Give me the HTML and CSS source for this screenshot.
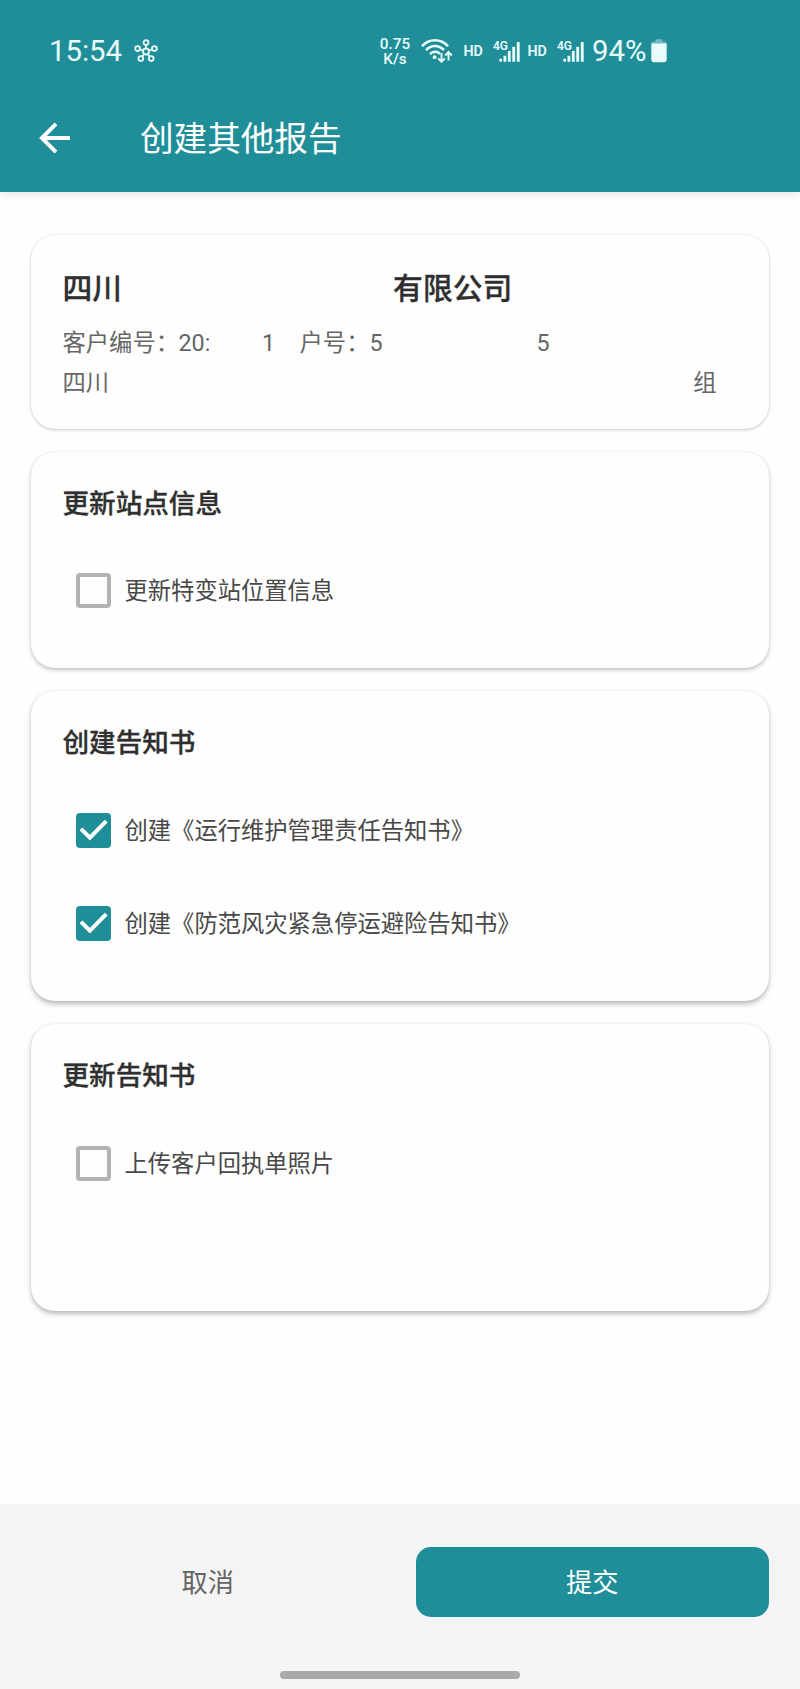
FILE: index.html
```html
<!DOCTYPE html>
<html lang="zh-CN">
<head>
<meta charset="utf-8">
<title>创建其他报告</title>
<link rel="stylesheet" href="styles.css">
</head>
<body>
<div class="screen">
  <header class="header">
    <div class="status">
      <span class="time">15:54</span>
      <svg class="hub" width="24" height="24" viewBox="0 0 24 24" fill="none" stroke="currentColor" stroke-width="1.8">
        <circle cx="12" cy="12.5" r="3"/>
        <circle cx="12" cy="3.6" r="2.4"/><circle cx="20.4" cy="9.6" r="2.4"/><circle cx="17.2" cy="19.6" r="2.4"/><circle cx="6.8" cy="19.6" r="2.4"/><circle cx="3.6" cy="9.6" r="2.4"/>
        <path d="M12 6v3.5M18 10.4l-3.2 1.2M15.8 17.7l-2-2.8M8.2 17.7l2-2.8M6 10.4l3.2 1.2"/>
      </svg>
      <span class="speed"><span>0.75</span><span>K/s</span></span>
      <svg class="wifi" width="32" height="26" viewBox="0 0 32 26" fill="none" stroke="currentColor" stroke-width="2.5">
        <path d="M1 8.2C8 .2 20 .2 27 8.2"/>
        <path d="M5 12.2c5-5.600 13-5.600 18 0"/>
        <path d="M9 16.200c3-3.300 7-3.300 10-.4"/>
        <circle cx="13.600" cy="19.200" r="1.900" fill="currentColor" stroke="none"/>
        <path stroke-width="1.900" d="M20.500 15v8.500M17.200 20.300l3.300 3.500 3.300-3.500M27.500 22.500v-8M24.200 17.500l3.300-3.500 3.300 3.500"/>
      </svg>
      <span class="hd">HD</span>
      <span class="signal">
        <span class="net">4G</span>
        <svg width="21" height="20" viewBox="6 2.500 21 20" fill="currentColor">
          <rect x="6.300" y="19.300" width="2.800" height="3" rx="1"/><rect x="10.500" y="16.300" width="2.800" height="6" rx=".6"/><rect x="14.900" y="11.300" width="2.800" height="11" rx=".6"/><rect x="19.300" y="7.300" width="2.800" height="15" rx=".6"/><rect x="23.800" y="2.500" width="2.900" height="19.800" rx=".6"/>
        </svg>
      </span>
      <span class="hd hd-second">HD</span>
      <span class="signal">
        <span class="net">4G</span>
        <svg width="21" height="20" viewBox="6 2.500 21 20" fill="currentColor">
          <rect x="6.300" y="19.300" width="2.800" height="3" rx="1"/><rect x="10.500" y="16.300" width="2.800" height="6" rx=".6"/><rect x="14.900" y="11.300" width="2.800" height="11" rx=".6"/><rect x="19.300" y="7.300" width="2.800" height="15" rx=".6"/><rect x="23.800" y="2.500" width="2.900" height="19.800" rx=".6"/>
        </svg>
      </span>
      <span class="percent">94%</span>
      <svg class="battery" width="16" height="24" viewBox="0 0 16 24" fill="currentColor">
        <path opacity=".4" d="M4.500 1.200q0-1 1-1h5q1 0 1 1v1.300h2q2 0 2 2v.5H.5v-.5q0-2 2-2h2z"/>
        <path d="M.3 4.600h15.400v16.200q0 2.400-2.400 2.400H2.700q-2.400 0-2.400-2.400z"/>
      </svg>
    </div>
    <div class="appbar">
      <svg class="back" width="32" height="32" viewBox="0 0 32 32" fill="none" stroke="currentColor" stroke-width="3.900"><path d="M31 16H3.500M17 1.900L2.900 16 17 30.100"/></svg>
      <h1 class="page-title">创建其他报告</h1>
    </div>
  </header>

  <main class="content">
    <section class="card company">
      <h2 class="company-name"><span>四川</span><span>有限公司</span></h2>
      <div class="meta">
        <span>客户编号：</span><span class="clipped">20:</span><span class="tail">1</span><span class="account">户号：5</span><span class="account-tail">5</span>
      </div>
      <div class="meta address"><span>四川</span><span>组</span></div>
    </section>

    <section class="card level-2">
      <h3 class="card-title">更新站点信息</h3>
      <div class="option"><span class="box"></span><span class="label">更新特变站位置信息</span></div>
    </section>

    <section class="card level-3">
      <h3 class="card-title">创建告知书</h3>
      <div class="option"><span class="box checked"><svg width="35" height="35" viewBox="0 0 35 35" fill="none" stroke="#fff" stroke-width="4"><path d="M5 15.800l8.900 8.900L30.200 8.200"/></svg></span><span class="label">创建《运行维护管理责任告知书》</span></div>
      <div class="option"><span class="box checked"><svg width="35" height="35" viewBox="0 0 35 35" fill="none" stroke="#fff" stroke-width="4"><path d="M5 15.800l8.900 8.900L30.200 8.200"/></svg></span><span class="label">创建《防范风灾紧急停运避险告知书》</span></div>
    </section>

    <section class="card upload level-3">
      <h3 class="card-title">更新告知书</h3>
      <div class="option"><span class="box"></span><span class="label">上传客户回执单照片</span></div>
    </section>
  </main>

  <footer class="actions">
    <button class="btn">取消</button>
    <button class="btn primary">提交</button>
  </footer>
  <div class="navbar"><span class="handle"></span></div>
</div>
</body>
</html>
```
FILE: styles.css
```css
* { box-sizing: border-box; }
body {
  margin: 0;
  background: #fefefe;
  color: #2f2f2f;
  font-family: Roboto, "Noto Sans CJK SC", sans-serif;
}
h1, h2, h3 { margin: 0; }
.screen {
  display: flex;
  flex-direction: column;
  width: 800px;
  height: 1689px;
  overflow: hidden;
}

/* Header */
.header {
  flex: none;
  height: 192px;
  background: #1f8e99;
  color: #fff;
  box-shadow: 0 2px 9px rgba(40, 40, 70, .13);
}
.status {
  display: flex;
  align-items: center;
  height: 102px;
  padding-left: 49px;
  color: #e9fbfb;
  white-space: nowrap;
}
.status svg { flex: none; }
.time { width: 85px; font-size: 29.300px; }
.speed {
  display: flex;
  flex-direction: column;
  align-items: center;
  width: 32px;
  margin-left: 221px;
  padding-top: 1px;
  font-size: 15.300px;
  font-weight: 500;
  line-height: 15px;
}
.wifi { margin-left: 9.500px; }
.hd { width: 20px; margin-left: 11px; font-size: 14.300px; font-weight: 600; }
.signal {
  display: flex;
  flex-direction: column;
  align-items: flex-end;
  width: 27px;
  height: 24px;
  margin-left: 9.500px;
}
.signal svg { margin-top: -12px; }
.net {
  align-self: flex-start;
  height: 15px;
  font-size: 12px;
  font-weight: 600;
  line-height: 15px;
}
.hd-second { margin-left: 7.500px; }
.percent { width: 55px; margin-left: 8px; font-size: 29.300px; }
.battery { margin-left: 3.500px; }
.appbar {
  display: flex;
  align-items: center;
  height: 72px;
  padding-left: 39px;
}
.page-title {
  margin-left: 69px;
  padding-top: 3px;
  font-size: 33.600px;
  font-weight: 400;
  line-height: 44px;
}

/* Cards */
.content {
  display: flex;
  flex: 1;
  flex-direction: column;
  gap: 23.100px;
  padding: 42.700px 31px 0;
}
.card {
  padding: 31px 31.500px;
  border-radius: 24px;
  background: #fefefe;
  box-shadow: 0 1px 3px rgba(0, 0, 0, .2), 0 0 1px rgba(0, 0, 0, .15);
}
.level-2 { box-shadow: 0 2px 4px rgba(0, 0, 0, .24), 0 0 1px rgba(0, 0, 0, .1); }
.level-3 { box-shadow: 0 2.500px 5px rgba(0, 0, 0, .27), 0 0 1px rgba(0, 0, 0, .08); }
.company { height: 194.200px; }
.company-name {
  display: flex;
  gap: 271px;
  padding-top: 1px;
  font-size: 29.800px;
  font-weight: 500;
  line-height: 44px;
  -webkit-text-stroke: .3px currentColor;
}
.meta {
  display: flex;
  height: 40.500px;
  margin-top: 12px;
  color: #666;
  font-size: 23.300px;
  line-height: 40.500px;
}
.clipped { width: 30.500px; margin-left: -.5px; overflow: hidden; }
.tail { margin-left: 53px; }
.account { margin-left: 24.500px; }
.account-tail { margin-left: 154px; }
.address { justify-content: space-between; margin-top: 0; padding-right: 21px; }
.card-title {
  margin-bottom: 20px;
  padding-top: 1px;
  font-size: 26.600px;
  font-weight: 500;
  line-height: 40px;
  -webkit-text-stroke: .3px currentColor;
}
.option {
  display: flex;
  align-items: center;
  gap: 13.500px;
  height: 93.400px;
  padding-left: 13.500px;
  color: #484848;
  font-size: 23.300px;
  line-height: 36px;
}
.label { padding-top: 1px; }
.box {
  flex: none;
  width: 35px;
  height: 35px;
  border: 4px solid #b3b3b3;
  border-radius: 4px;
}
.checked { border: 0; background: #1f8e99; }
.checked svg { display: block; }
.upload { height: 286.500px; }

/* Footer */
.actions {
  display: grid;
  flex: none;
  grid-template-columns: 1fr 1fr;
  gap: 31px;
  height: 156px;
  padding: 43px 31px;
  background: #f4f4f4;
}
.btn {
  height: 69.500px;
  padding: 2px 0 0;
  border: 0;
  border-radius: 15px;
  background: none;
  color: #646464;
  font: 400 26.200px/40px Roboto, "Noto Sans CJK SC", sans-serif;
}
.primary { background: #1f8e99; color: #fff; }
.navbar {
  display: flex;
  flex: none;
  justify-content: center;
  height: 29px;
  padding-top: 10.500px;
  background: #f5f5f5;
}
.handle { width: 240px; height: 8px; border-radius: 4px; background: #a9a9a9; }
```
